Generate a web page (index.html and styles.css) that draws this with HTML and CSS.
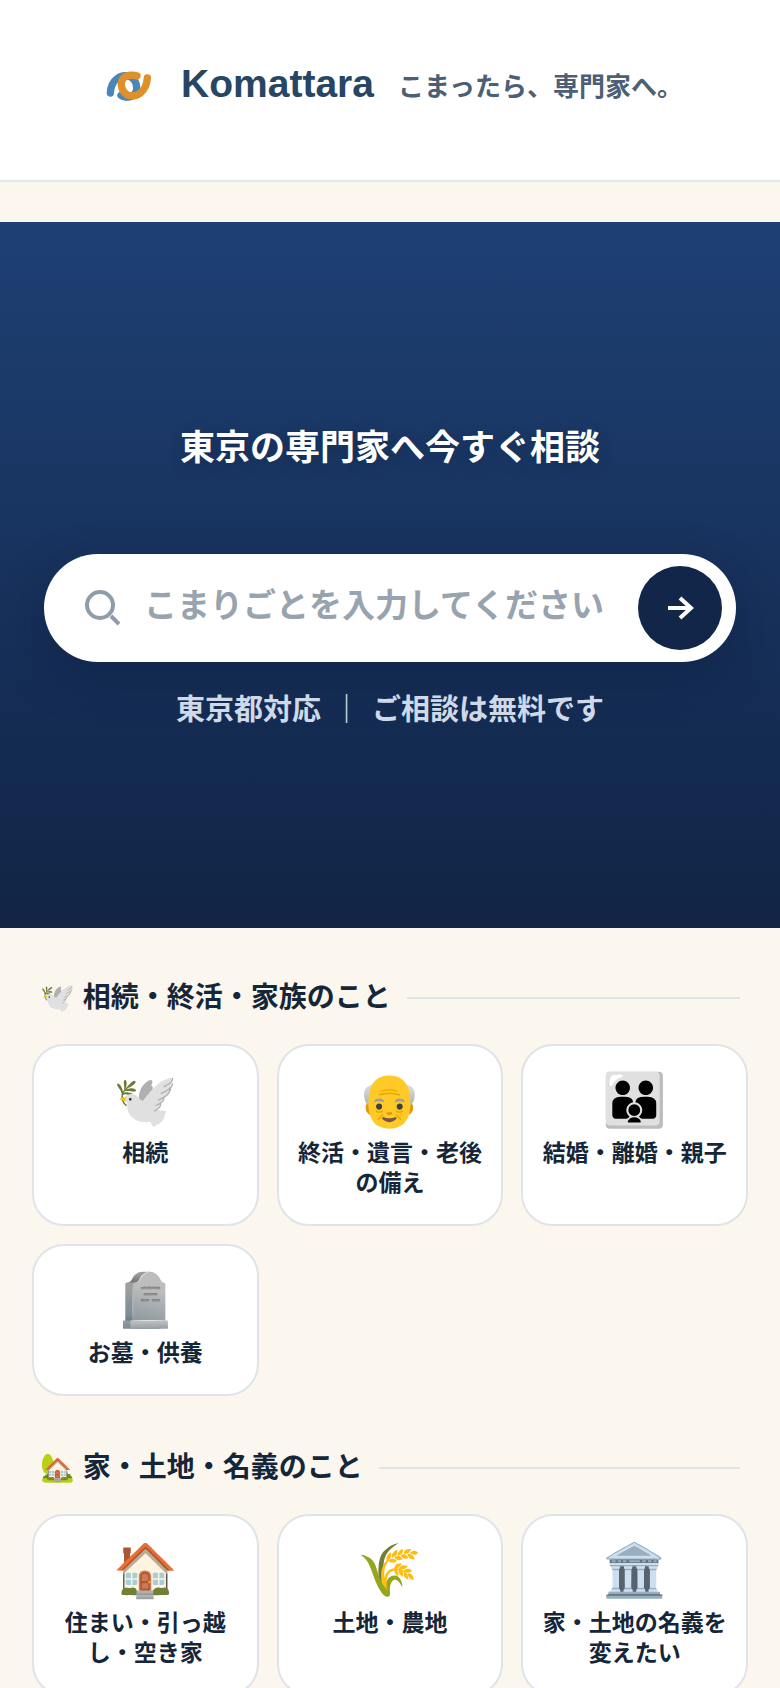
FILE: index.html
```html
<!doctype html>
<html lang="ja">
	<head>
		<meta charset="UTF-8" />
		<meta name="viewport" content="width=device-width, initial-scale=1.0" />
		<title>Komattara</title>
		<link rel="stylesheet" href="styles.css">
	</head>

	<body>
		<header class="site-header">
			<svg class="logo" viewBox="18 6 192 192" aria-hidden="true">
				<g fill="none" stroke-width="22" stroke-linecap="round">
					<path stroke="#4a86b8" d="M90 136C100 144 120 144 130 133C144 117 136 88 116 80C91 71 60 88 58 129" />
					<path stroke="#e0902a" d="M138 78C128 74 108 74 98 84C84 99 92 128 112 136C137 143 166 126 169 84" />
				</g>
			</svg>
			<span class="brand">Komattara</span>
			<span class="tagline">こまったら、専門家へ。</span>
		</header>

		<section class="hero">
			<h1>東京の専門家へ今すぐ相談</h1>
			<form class="search">
				<svg class="search-icon" viewBox="0 0 36 36" aria-hidden="true">
					<circle cx="16" cy="15" r="13" />
					<path d="M27 26L35 34" />
				</svg>
				<input type="text" id="searchField" aria-label="こまりごと" placeholder="こまりごとを入力してください" />
				<button type="button" aria-label="相談する">
					<svg viewBox="0 0 28 28" aria-hidden="true">
						<path d="M2 14H26M14 4L25 14L14 24" />
					</svg>
				</button>
			</form>
			<p class="hero-note">東京都対応 <span class="divider">｜</span> ご相談は無料です</p>
		</section>

		<main>
			<section class="category">
				<h2>🕊️ 相続・終活・家族のこと</h2>
				<div class="cards">
					<a class="card" href="#"><span class="emoji">🕊️</span>相続</a>
					<a class="card" href="#"><span class="emoji">👴</span>終活・遺言・老後の備え</a>
					<a class="card" href="#"><span class="emoji">👪</span>結婚・離婚・親子</a>
					<a class="card" href="#"><span class="emoji">🪦</span>お墓・供養</a>
				</div>
			</section>

			<section class="category">
				<h2>🏡 家・土地・名義のこと</h2>
				<div class="cards">
					<a class="card" href="#"><span class="emoji">🏠</span>住まい・引っ越し・空き家</a>
					<a class="card" href="#"><span class="emoji">🌾</span>土地・農地</a>
					<a class="card" href="#"><span class="emoji">🏛️</span>家・土地の名義を変えたい</a>
				</div>
			</section>
		</main>
	</body>
</html>
```

FILE: styles.css
```css
* {
	box-sizing: border-box;
}

body {
	margin: 0;
	font-family: "Liberation Sans", "Noto Sans CJK JP", sans-serif;
	color: #152638;
	background-color: #fbf6ee;
}

.site-header {
	display: flex;
	align-items: center;
	justify-content: center;
	padding: 52px 16px 64px;
	background-color: white;
	border-bottom: 2px solid #e2e9ea;
}

.logo {
	width: 64px;
	height: 64px;
	margin-right: 20px;
}

.brand {
	font-size: 39px;
	font-weight: bold;
	color: #264663;
}

.tagline {
	margin-left: 24px;
	font-size: 26px;
	font-weight: bold;
	color: #4d5f74;
}

.hero {
	margin-top: 40px;
	padding: 199px 44px;
	text-align: center;
	color: white;
	background: linear-gradient(#1e4074, #112445);
}

.hero h1 {
	margin: 0 0 79px;
	font-size: 35px;
	line-height: 54px;
	text-shadow: 0 4px 16px rgba(0, 0, 0, 0.2);
}

.search {
	display: flex;
	align-items: center;
	padding: 12px 14px 12px 40px;
	background-color: white;
	border-radius: 54px;
	box-shadow: 0 16px 48px rgba(10, 20, 50, 0.3);
}

.search-icon {
	flex: none;
	width: 36px;
	height: 36px;
	fill: none;
	stroke: #8f9dab;
	stroke-width: 4;
}

.search input {
	flex: 1;
	min-width: 0;
	padding: 0 0 4px 24px;
	font-family: inherit;
	font-size: 33px;
	font-weight: bold;
	color: #152638;
	background: none;
	border: none;
	outline: none;
}

.search input::placeholder {
	color: #98a3b0;
}

.search button {
	display: flex;
	flex: none;
	align-items: center;
	justify-content: center;
	width: 84px;
	height: 84px;
	padding: 0;
	background-color: #112648;
	border: none;
	border-radius: 50%;
	cursor: pointer;
}

.search button svg {
	width: 28px;
	height: 28px;
	fill: none;
	stroke: white;
	stroke-width: 4;
}

.hero-note {
	margin: 29px 0 0;
	font-size: 29px;
	font-weight: bold;
	line-height: 38px;
	color: #cfd9e8;
}

.divider {
	margin: 0 3px;
}

main {
	padding: 48px 32px;
}

.category {
	margin-bottom: 50px;
}

.category h2 {
	display: flex;
	align-items: center;
	gap: 16px;
	margin: 0 0 24px;
	padding: 0 8px;
	font-size: 28px;
	line-height: 44px;
}

.category h2::after {
	content: "";
	flex: 1;
	height: 2px;
	background-color: #dfe4e8;
}

.cards {
	display: grid;
	grid-template-columns: repeat(3, 1fr);
	gap: 18px;
}

.card {
	padding: 26px 16px;
	font-size: 23px;
	font-weight: bold;
	line-height: 30px;
	text-align: center;
	text-decoration: none;
	color: inherit;
	background-color: white;
	border: 2px solid #dfe4e9;
	border-radius: 32px;
}

.emoji {
	display: block;
	margin-bottom: 10px;
	font-size: 52px;
	font-weight: normal;
	line-height: 56px;
}
```
